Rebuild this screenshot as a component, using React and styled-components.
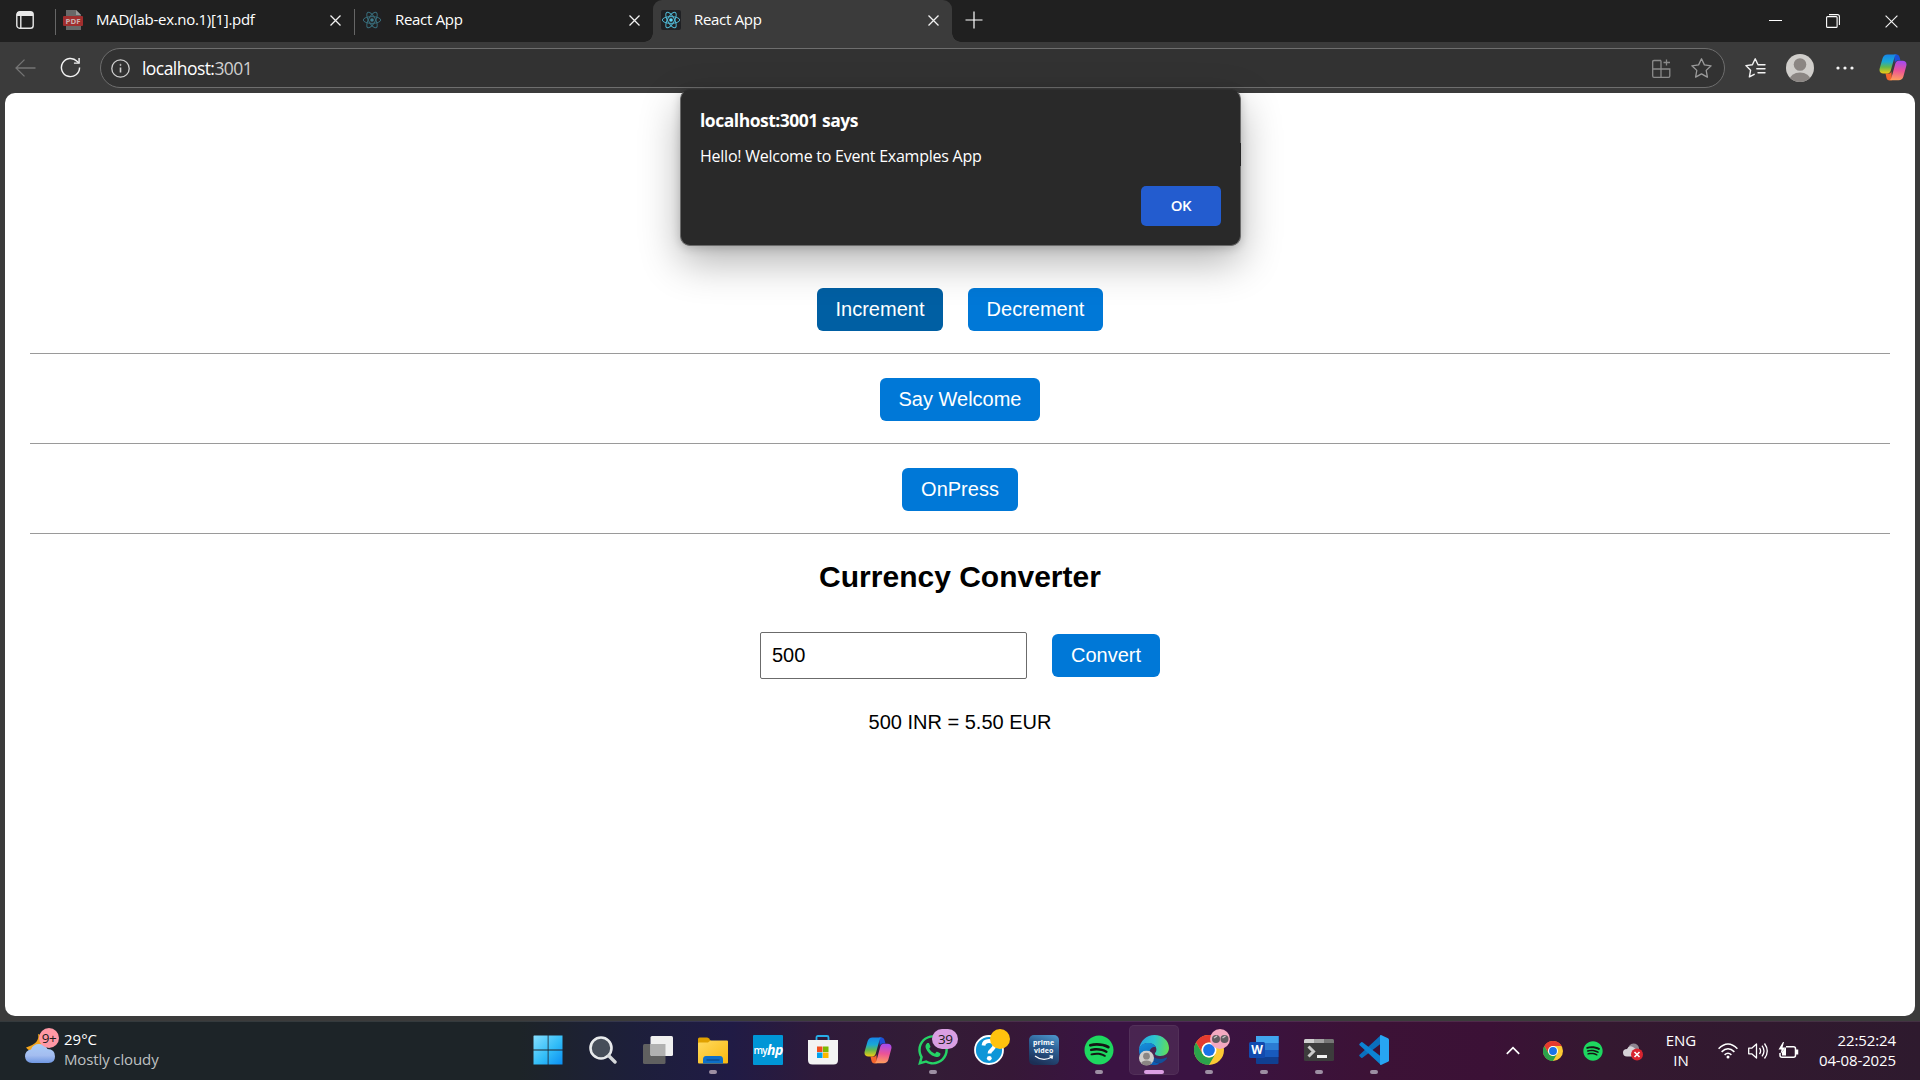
import React from 'react';
import styled, { createGlobalStyle } from 'styled-components';
import { FaSpotify, FaWhatsapp } from 'react-icons/fa';

const uiFont = '"Open Sans", "Noto Sans", sans-serif';
const pageFont = '"Liberation Sans", Arial, sans-serif';

const GlobalStyle = createGlobalStyle`
  * { box-sizing: border-box; }
  html, body { margin: 0; padding: 0; background: #3b3b3b; overflow: hidden; }
  svg { display: block; flex: none; }
`;

/* ---------- window ---------- */
const Desktop = styled.div`
  position: relative;
  display: grid;
  grid-template-columns: 1920px;
  grid-template-rows: 42px 51px 923px 5px 59px;
  width: 1920px;
  height: 1080px;
  overflow: hidden;
  background: #3b3b3b;
  font-family: ${uiFont};
`;

const TabBar = styled.div`
  display: flex;
  align-items: stretch;
  background: #202020;
  color: #fff;
`;
const TabMenu = styled.div`
  width: 55px;
  padding: 11px 0 0 16px;
`;
const Tab = styled.div`
  position: relative;
  display: flex;
  align-items: center;
  width: 299px;
  padding: 0 13px 2px 8px;
  border-radius: ${p => (p.$active ? '9px 9px 0 0' : '0')};
  background: ${p => (p.$active ? '#3b3b3b' : 'transparent')};
  ${p => p.$divider && `
    &::before { content: ''; position: absolute; left: 0; top: 9px; width: 1px; height: 26px; background: #666; }
  `}
  ${p => p.$active && `
    &::before, &::after {
      content: ''; position: absolute; bottom: 0; width: 9px; height: 9px;
    }
    &::before { left: -9px; background: radial-gradient(circle at 0 0, transparent 8.5px, #3b3b3b 9px); }
    &::after { right: -9px; background: radial-gradient(circle at 100% 0, transparent 8.5px, #3b3b3b 9px); }
  `}
`;
const TabTitle = styled.span`
  flex: 1;
  margin: 0 0 3px 13px;
  font-size: 15px;
  line-height: 20px;
  letter-spacing: ${p => p.$track || 0}px;
  white-space: nowrap;
`;
const NewTab = styled.div`
  padding: 11px 0 0 13px;
`;
const WindowButtons = styled.div`
  display: flex;
  margin-left: auto;
`;
const WindowButton = styled.div`
  display: flex;
  align-items: center;
  justify-content: center;
  width: 58px;
`;

const Toolbar = styled.div`
  display: flex;
  align-items: center;
  padding: 0 9px 0 14px;
  height: 51px;
`;
const ToolSlot = styled.div`
  display: flex;
  align-items: center;
  justify-content: center;
  width: ${p => p.$w}px;
  padding-left: ${p => p.$shift || 0}px;
`;
const AddressBar = styled.div`
  display: flex;
  align-items: center;
  width: 1625px;
  height: 40px;
  margin: 1px 0 0 0;
  padding: 0 3px 0 10px;
  border: 1px solid #6e6e6e;
  border-radius: 20px;
  background: #323232;
`;
const Address = styled.span`
  flex: 1;
  margin-left: 12px;
  color: #fff;
  font-size: 17.5px;
  line-height: 24px;
  letter-spacing: -0.55px;
  em { font-style: normal; color: #cfcfcf; }
`;

/* ---------- page ---------- */
const Page = styled.main`
  margin: 0 5px;
  padding: 0 25px;
  border-radius: 10px;
  background: #fff;
  color: #000;
  font-family: ${pageFont};
`;
const Section = styled.section`
  display: flex;
  align-items: flex-end;
  justify-content: center;
  gap: 25px;
  height: ${p => p.$h}px;
  padding-bottom: 22px;
  border-bottom: 1px solid #9a9a9a;
`;
const ActionButton = styled.button`
  height: 43px;
  width: ${p => p.$w}px;
  padding: 0;
  border: 0;
  border-radius: 6px;
  background: ${p => (p.$pressed ? '#005fa3' : '#0078d7')};
  color: #fff;
  font: 20px/43px ${pageFont};
  text-align: center;
`;
const Heading = styled.h2`
  margin: 0;
  padding-top: 25px;
  font-size: 30px;
  line-height: 36px;
  text-align: center;
`;
const ConvertRow = styled.div`
  display: flex;
  align-items: center;
  justify-content: center;
  gap: 25px;
  margin-top: 37px;
`;
const AmountInput = styled.input`
  width: 267px;
  height: 47px;
  padding: 0 11px;
  border: 1px solid #6b6b6b;
  border-radius: 2px;
  outline: none;
  background: #fff;
  color: #000;
  font: 20px ${pageFont};
`;
const Result = styled.p`
  margin: 31px 0 0;
  font-size: 20px;
  line-height: 24px;
  text-align: center;
`;

/* ---------- alert, over the page ---------- */
const Alert = styled.div`
  position: absolute;
  left: 680px;
  top: 89px;
  display: flex;
  flex-direction: column;
  width: 561px;
  height: 157px;
  padding: 18px 19px;
  border: 1px solid #6a6a6a;
  border-top-color: #2e2e2e;
  border-radius: 10px;
  background: #292929;
  color: #fff;
  box-shadow: 0 16px 40px rgba(0, 0, 0, 0.3), 0 2px 10px rgba(0, 0, 0, 0.18);
  &::after {
    content: ''; position: absolute; right: -1px; top: 53px; width: 1px; height: 23px; background: #242424;
  }
`;
const AlertTitle = styled.div`
  font-size: 17.5px;
  font-weight: 700;
  line-height: 24px;
  letter-spacing: -0.49px;
`;
const AlertText = styled.div`
  margin-top: 13px;
  font-size: 16px;
  line-height: 22px;
  letter-spacing: -0.24px;
`;
const AlertOk = styled.button`
  align-self: flex-end;
  width: 80px;
  height: 40px;
  margin-top: 19px;
  padding: 0 0 2px;
  border: 0;
  border-radius: 5px;
  background: #235ccf;
  color: #fff;
  font: 600 15px/38px ${uiFont};
  letter-spacing: -0.5px;
`;

/* ---------- taskbar ---------- */
const TaskBar = styled.footer`
  display: grid;
  grid-template-columns: 520px 882px 1fr;
  border-top: 1px solid rgba(255, 255, 255, 0.1);
  color: #fff;
  background: linear-gradient(90deg,
    #1d2428 0, #1d2428 520px, #1d1f3a 630px, #201b45 730px, #2f1a3a 820px, #331c36 930px,
    #361837 1010px, #3a1343 1110px, #3a1342 1200px, #3c1236 1370px, #3b1136 1490px,
    #341830 1600px, #2e1a2e 1920px);
`;
const Weather = styled.div`
  display: flex;
  padding: 5px 0 0 24px;
`;
const WeatherIcon = styled.div`
  position: relative;
  width: 40px;
`;
const Bubble = styled.span`
  position: absolute;
  left: ${p => p.$x}px;
  top: ${p => p.$y}px;
  width: ${p => p.$w || 20}px;
  height: 20px;
  border-radius: 10px;
  background: ${p => p.$c};
  color: #1b1b1b;
  font-size: 13.5px;
  line-height: 20px;
  letter-spacing: -0.4px;
  text-align: center;
`;
const WeatherText = styled.div`
  padding-top: 2px;
  font-size: 15px;
  line-height: 20.4px;
  div + div { color: #bfc1c2; letter-spacing: -0.12px; }
`;
const Apps = styled.div`
  display: flex;
`;
const AppSlot = styled.div`
  position: relative;
  display: flex;
  flex: 1;
  align-items: center;
  justify-content: center;
  margin: 3px 2.5px 5px;
  border-radius: 5px;
  background: ${p => (p.$active ? 'rgba(255,255,255,0.08)' : 'transparent')};
  box-shadow: ${p => (p.$active ? 'inset 0 0 0 1px rgba(255,255,255,0.05)' : 'none')};
  &::after {
    content: '';
    display: ${p => (p.$open ? 'block' : 'none')};
    position: absolute;
    left: 50%;
    bottom: 1px;
    width: ${p => (p.$active ? 20 : 8)}px;
    height: 4px;
    border-radius: 2px;
    transform: translateX(-50%);
    background: ${p => (p.$active ? '#dc9fe4' : '#9d8fa3')};
  }
`;
const HpTile = styled.div`
  display: flex;
  align-items: center;
  justify-content: center;
  width: 30px;
  height: 30px;
  border-radius: 1px;
  background: #0096d6;
  font-size: 10px;
  font-weight: 600;
  letter-spacing: -0.6px;
  i { font-size: 14px; line-height: 14px; font-weight: 700; }
`;
const PrimeTile = styled.div`
  display: flex;
  flex-direction: column;
  align-items: center;
  width: 30px;
  height: 30px;
  padding-top: 4px;
  border-radius: 5px;
  background: linear-gradient(20deg, #1c2f55 10%, #2c5f94 60%, #4f9bd0);
  font-size: 7px;
  font-weight: 700;
  line-height: 8px;
  letter-spacing: 0.1px;
`;
const Tray = styled.div`
  display: flex;
  align-items: center;
  justify-content: flex-end;
  padding: 0 24px 1px 0;
  font-size: 15px;
  line-height: 20px;
`;
const TraySlot = styled.div`
  display: flex;
  justify-content: center;
  width: ${p => p.$w}px;
`;
const TrayText = styled.div`
  width: ${p => p.$w}px;
  padding-bottom: 2px;
  text-align: ${p => p.$align || 'center'};
  letter-spacing: ${p => p.$track || 0}px;
`;

/* ---------- icons ---------- */
const Cross = ({ s = 11, w = 1.3 }) => (
  <svg width={s} height={s} viewBox="0 0 11 11" stroke="#f2f2f2" strokeWidth={w}><path d="M.5 .5l10 10M10.5 .5l-10 10" /></svg>
);
const ReactLogo = ({ dim }) => (
  <svg width="20" height="20" viewBox="0 0 20 20" opacity={dim ? 0.5 : 1}>
    <rect width="20" height="20" rx="2" fill="#202124" />
    <g fill="none" stroke="#4fb6d2" strokeWidth="1">
      <ellipse cx="10" cy="10" rx="8.7" ry="3.4" />
      <ellipse cx="10" cy="10" rx="8.7" ry="3.4" transform="rotate(60 10 10)" />
      <ellipse cx="10" cy="10" rx="8.7" ry="3.4" transform="rotate(120 10 10)" />
    </g>
    <circle cx="10" cy="10" r="1.8" fill="#61dafb" />
  </svg>
);
const PdfIcon = () => (
  <svg width="20" height="20" viewBox="0 0 20 20">
    <path d="M3 0h10l5 5v15H3z" fill="#686868" />
    <path d="M13 0l5 5h-5z" fill="#999" />
    <rect x="0" y="6" width="20" height="10" rx="1" fill="#a12e2e" />
    <text x="10" y="13.8" textAnchor="middle" fill="#c9b3b3" fontFamily="Open Sans" fontWeight="700" fontSize="7.8">PDF</text>
  </svg>
);
const CopilotLogo = ({ id }) => (
  <svg width="28" height="27" viewBox="0 0 28 27">
    <defs>
      <linearGradient id={id + 'a'} x1="0" y1="0" x2="0" y2="1">
        <stop offset="0" stopColor="#1685e8" /><stop offset=".38" stopColor="#1aa8d5" />
        <stop offset=".66" stopColor="#63b84d" /><stop offset="1" stopColor="#f3cb12" />
      </linearGradient>
      <linearGradient id={id + 'b'} x1=".5" y1="0" x2=".4" y2="1">
        <stop offset="0" stopColor="#a34af0" /><stop offset=".5" stopColor="#ec5396" /><stop offset="1" stopColor="#ffa05c" />
      </linearGradient>
    </defs>
    <path d="M15 .5h2.7c1.5 0 2.3.9 2.8 2.4l1 3.6h-2.7c-1.6 0-2.5.9-3 2.4z" fill="#1c4fd8" />
    <path d="M13 26.3h-2.7c-1.5 0-2.3-.9-2.8-2.4l-1-4.4h3c1.5 0 2.4-.9 2.9-2.3z" fill="#f4652c" />
    <path d="M8.5.5H18c-1.6.3-2.2 1.6-2.6 3l-3.6 13c-.6 2-1.8 3-3.6 3H4.4c-3 0-4.6-1.8-3.6-5.4L3.6 4.3C4.3 1.8 5.9.5 8.5.5z" fill={`url(#${id}a)`} />
    <path d="M19.5 26.3H10c1.6-.3 2.2-1.6 2.6-3l3.6-13.4c.6-2.2 1.8-3.2 3.6-3.2h3.8c3 0 4.6 1.9 3.6 5.5l-2.8 10.3c-.7 2.5-2.3 3.8-4.9 3.8z" fill={`url(#${id}b)`} />
  </svg>
);
const ChromeLogo = ({ s = 30 }) => (
  <svg width={s} height={s} viewBox="0 0 30 30">
    <circle cx="15" cy="15" r="15" fill="#fcc934" />
    <path d="M2 7.5A15 15 0 0 1 28 7.5H15A7.5 7.5 0 0 0 8.5 18.7z" fill="#e53a2f" />
    <path d="M2 7.5A15 15 0 0 0 15 30l6.5-11.3A7.5 7.5 0 0 1 8.5 18.7z" fill="#2ba24c" />
    <circle cx="15" cy="15" r="7.5" fill="#fff" />
    <circle cx="15" cy="15" r="5.9" fill="#1a73e8" />
  </svg>
);
const SpotifyLogo = ({ s }) => (
  <svg width={s} height={s} viewBox="0 0 30 30">
    <circle cx="15" cy="15" r="14" fill="#151515" />
    <FaSpotify size={30} color="#1ed760" />
  </svg>
);
const Person = ({ s }) => (
  <svg width={s} height={s} viewBox="0 0 28 28">
    <clipPath id={'pc' + s}><circle cx="14" cy="14" r="14" /></clipPath>
    <g clipPath={`url(#pc${s})`}>
      <rect width="28" height="28" fill="#d0cecb" />
      <circle cx="14" cy="10.5" r="6.3" fill="#8b8683" />
      <ellipse cx="14" cy="26" rx="10.5" ry="7.5" fill="#8b8683" />
    </g>
  </svg>
);
const EdgeLogo = () => (
  <svg width="30" height="30" viewBox="0 0 30 30" overflow="visible">
    <defs>
      <linearGradient id="e1" x1="0" y1=".4" x2="1" y2=".5">
        <stop offset="0" stopColor="#27a4e3" /><stop offset=".5" stopColor="#2dc5cf" /><stop offset="1" stopColor="#61df58" />
      </linearGradient>
      <linearGradient id="e2" x1="0" y1="0" x2=".4" y2="1">
        <stop offset="0" stopColor="#1693dd" /><stop offset="1" stopColor="#0b5db4" />
      </linearGradient>
    </defs>
    <path d="M0 14C1 6 7.5 0 15.5 0 24 0 30 6 30 13c0 5-3.8 8-8.5 8-3.7 0-6-1.3-5.5-2.8.3-.8 1.4-1.2 1.4-3.6C17.4 10.5 13.5 8 9 8c-4 0-7 2-9 6z" fill="url(#e1)" />
    <path d="M0 14c1.5-4 5-6 9-6 4.500 0 7 2 8 4.500-1.500-.9-5.500-.5-6.500 4.500-1 6 4 10.500 10 11.500-1.600 1-3.500 1.500-5.500 1.500C6.500 30-.7 23 0 14z" fill="url(#e2)" />
    <path d="M10.500 17c-.5 6.500 5 11.500 11 11.200 2.500-.8 5-2.700 6.500-5 .3-.6-.2-.9-.7-.6-1.600.8-3.300 1.300-5.300 1.300-6 0-10.500-3-10.500-7.500z" fill="#124f98" />
    <g transform="translate(0 15.500)"><Person s={15} /></g>
  </svg>
);
const WordLogo = () => (
  <svg width="30" height="28" viewBox="0 0 30 28">
    <rect x="7" y="0" width="22.5" height="28" rx="1" fill="#103f91" />
    <rect x="7" y="0" width="22.5" height="21" fill="#185abd" />
    <rect x="7" y="0" width="22.5" height="14" fill="#2b7cd3" />
    <rect x="7" y="0" width="22.5" height="7" fill="#41a5ee" />
    <rect x="0" y="6" width="16" height="16" rx="1.5" fill="#124baf" />
    <text x="8" y="18.3" textAnchor="middle" fill="#fff" fontFamily="Open Sans" fontWeight="700" fontSize="12">W</text>
  </svg>
);

const apps = [
  { id: 'start', icon: (
    <svg width="30" height="30" viewBox="0 0 30 30">
      <defs><linearGradient id="win" x1="0" y1="0" x2="1" y2="1"><stop offset="0" stopColor="#86dfff" /><stop offset=".55" stopColor="#32bdf8" /><stop offset="1" stopColor="#0a8ef2" /></linearGradient></defs>
      <path fill="url(#win)" d="M1 .5h13.700v14H.5V1zM15.500.5h14v14h-14zM.5 15.500h14.200v14H.5zM15.500 15.500h14v14h-14z" />
    </svg>) },
  { id: 'search', icon: (
    <svg width="28" height="28" viewBox="0 0 28 28">
      <circle cx="12" cy="12" r="10.5" fill="#474e5a" stroke="#e8eaec" strokeWidth="2.600" />
      <path d="M20 20l6 6" stroke="#d5d8da" strokeWidth="3.4" strokeLinecap="round" />
    </svg>) },
  { id: 'views', icon: (
    <svg width="30" height="28" viewBox="0 0 30 28">
      <rect x="0" y="8" width="22.5" height="20" rx="1.5" fill="#606060" />
      <rect x="7.5" y="0" width="22.5" height="20" rx="1.5" fill="#f0f0f0" />
      <path d="M7.5 8h15v12H9q-1.5 0-1.5-1.5z" fill="#b1b1b1" />
    </svg>) },
  { id: 'files', open: true, icon: (
    <svg width="30" height="27" viewBox="0 0 30 27">
      <defs><linearGradient id="fo" x1="0" y1="0" x2="1" y2="1"><stop offset="0" stopColor="#ffda5e" /><stop offset="1" stopColor="#f8b80f" /></linearGradient></defs>
      <path d="M0 2Q0 .5 1.5.5H9q1 0 1.7.8L13 4v4H0z" fill="#e0a100" />
      <path d="M0 6.5q0-1 1-1h9l2.500-2H29q1 0 1 1v21q0 1-1 1H1q-1 0-1-1z" fill="url(#fo)" />
      <path d="M5 26.5v-4Q5 19 8 19h14q3 0 3 3.5v4z" fill="#0d6fc8" />
      <path d="M8.5 23h13" stroke="#0a4587" strokeWidth="1.2" />
    </svg>) },
  { id: 'hp', icon: <HpTile>my<i>hp</i></HpTile> },
  { id: 'store', icon: (
    <svg width="30" height="30" viewBox="0 0 30 30">
      <path d="M8.5 6V2.5q0-1.500 1.500-1.500h9q1.500 0 1.500 1.500V6" fill="none" stroke="#27aee8" strokeWidth="1.8" />
      <path d="M0 5h30v20q0 4.500-4.500 4.500h-21Q0 29.500 0 25z" fill="#f3f3f3" />
      <rect x="9" y="11.5" width="5.5" height="5.5" fill="#f04f1f" /><rect x="15" y="11.5" width="5.5" height="5.5" fill="#7eb801" />
      <rect x="9" y="17.5" width="5.5" height="5.5" fill="#00a2ed" /><rect x="15" y="17.5" width="5.5" height="5.5" fill="#fdb800" />
    </svg>) },
  { id: 'copilot', icon: <CopilotLogo id="ct" /> },
  { id: 'whatsapp', open: true, icon: <FaWhatsapp size={34} color="#25d366" />, bubble: <Bubble $x={24} $y={4} $w={26} $c="#d99fe3">39</Bubble> },
  { id: 'help', icon: (
    <svg width="30" height="30" viewBox="0 0 30 30">
      <circle cx="15" cy="15" r="14" fill="#0d96d8" stroke="#fff" strokeWidth="1.8" />
      <path d="M9.5 10.5C9.8 7.5 12 6 15 6c3.500 0 5.500 2 5.500 4.500 0 4-5 3.800-5 8" fill="none" stroke="#fff" strokeWidth="3.8" />
      <circle cx="15.3" cy="23.3" r="2.4" fill="#fff" />
    </svg>), bubble: <Bubble $x={26} $y={4} $c="#ffc20e" /> },
  { id: 'prime', icon: (
    <PrimeTile>
      <span>prime</span>
      <span>video</span>
      <svg width="20" height="6" viewBox="0 0 20 6" fill="none" stroke="#fff" strokeWidth="1.2"><path d="M1 1q8.500 6.500 17 .8M15.500.8l3 .3-.6 2.800" /></svg>
    </PrimeTile>) },
  { id: 'spotify', open: true, icon: <SpotifyLogo s={30} /> },
  { id: 'edge', open: true, active: true, icon: <EdgeLogo /> },
  { id: 'chrome', open: true, icon: <ChromeLogo />, bubble: (
    <Bubble $x={26} $y={4} $c="#f4a9c0">
      <svg width="20" height="20" viewBox="0 0 20 20"><circle cx="6" cy="10" r="4" fill="#625c60" /><circle cx="14.5" cy="10" r="4" fill="#625c60" /><path d="M4 9l3-2M12.500 9l3-2" stroke="#c7c2c4" strokeWidth="1.5" /></svg>
    </Bubble>) },
  { id: 'word', open: true, icon: <WordLogo /> },
  { id: 'terminal', open: true, icon: (
    <svg width="30" height="22" viewBox="0 0 30 22">
      <rect width="30" height="22" rx="1.5" fill="#3c3c3c" />
      <path d="M0 4V1.5Q0 0 1.5 0H10v4z" fill="#cfcfcf" /><path d="M10 0h10v4H10z" fill="#a3a3a3" /><path d="M20 0h8.500Q30 0 30 1.500V4H20z" fill="#767676" />
      <path d="M4.5 7.5l5 5-5 5" fill="none" stroke="#c9c9c9" strokeWidth="3" /><rect x="13" y="16" width="10" height="3" fill="#f2f2f2" />
    </svg>) },
  { id: 'code', open: true, icon: (
    <svg width="30" height="30" viewBox="0 0 30 30">
      <path d="M22 0v8.500L3.500 22.800q-.7.5-1.300 0L.6 21.300q-.8-.8 0-1.500z" fill="#0a6fbd" />
      <path d="M22 30v-8.500L3.500 7.200q-.7-.5-1.300 0L.6 8.700q-.8.8 0 1.500z" fill="#0c83d2" />
      <path d="M22 0l7 3.200q1 .5 1 1.600v20.400q0 1.100-1 1.600L22 30q-1 0-1-1V1q0-1 1-1z" fill="#27a5f2" />
    </svg>) },
];

export default function App() {
  return (
    <Desktop>
      <GlobalStyle />
      <TabBar>
        <TabMenu>
          <svg width="18" height="18" viewBox="0 0 18 18" fill="none" stroke="#e8e8e8" strokeWidth="1.4">
            <rect x=".8" y=".8" width="16.4" height="16.4" rx="2.8" /><path d="M1 3h16" strokeWidth="4" /><path d="M4.8 4v13" />
          </svg>
        </TabMenu>
        <Tab $divider><PdfIcon /><TabTitle $track={-0.3}>MAD(lab-ex.no.1)[1].pdf</TabTitle><Cross /></Tab>
        <Tab $divider><ReactLogo dim /><TabTitle $track={-0.3}>React App</TabTitle><Cross /></Tab>
        <Tab $active><ReactLogo /><TabTitle $track={-0.3}>React App</TabTitle><Cross /></Tab>
        <NewTab>
          <svg width="18" height="18" viewBox="0 0 18 18" stroke="#fff" strokeWidth="1.2"><path d="M9 .5v17M.5 9h17" /></svg>
        </NewTab>
        <WindowButtons>
          <WindowButton><svg width="13" height="2" viewBox="0 0 13 2"><path d="M0 0h13v1H0z" fill="#fff" /></svg></WindowButton>
          <WindowButton>
            <svg width="14" height="14" viewBox="0 0 14 14" fill="none" stroke="#fff" strokeWidth="1.1"><rect x=".6" y="2.6" width="10.5" height="10.8" rx="1" /><path d="M3 .6h8.400q2 0 2 2V11" /></svg>
          </WindowButton>
          <WindowButton><Cross s={13} w={1} /></WindowButton>
        </WindowButtons>
      </TabBar>

      <Toolbar>
        <ToolSlot $w={22}>
          <svg width="21" height="18" viewBox="0 0 21 18" fill="none" stroke="#757575" strokeWidth="1.3"><path d="M20.500 9H1M9.500.6L1 9l8.500 8.400" /></svg>
        </ToolSlot>
        <ToolSlot $w={64} $shift={4}>
          <svg width="21" height="21" viewBox="0 0 22 22" fill="none" stroke="#f2f2f2" strokeWidth="1.5">
            <path d="M20.500 11A9.500 9.500 0 1 1 17.800 4.400L19.500 6" /><path d="M20 1v5.400h-5.400" />
          </svg>
        </ToolSlot>
        <AddressBar>
          <svg width="19" height="19" viewBox="0 0 19 19" fill="none" stroke="#cfcfcf" strokeWidth="1.3">
            <circle cx="9.5" cy="9.5" r="8.7" /><path d="M9.500 8.500v5" strokeWidth="1.6" /><circle cx="9.5" cy="5.9" r=".7" fill="#cfcfcf" strokeWidth=".5" />
          </svg>
          <Address>localhost:<em>3001</em></Address>
          <ToolSlot $w={40}>
            <svg width="19" height="19" viewBox="0 0 19 19" fill="none" stroke="#8a8a8a" strokeWidth="1.3">
              <path d="M9 1.500H2q-1.300 0-1.300 1.300V17q0 1.300 1.300 1.300h14.500q1.300 0 1.300-1.300v-7H.7M9 1.500v16.800M14.500.5v6M11.500 3.500h6.500" />
            </svg>
          </ToolSlot>
          <ToolSlot $w={40}>
            <svg width="21" height="20" viewBox="0 0 21 20" fill="none" stroke="#9b9b9b" strokeWidth="1.3" strokeLinejoin="round">
              <path d="M10.500.8l2.900 6.100 6.700.9-4.900 4.600 1.200 6.700-5.900-3.200-5.900 3.200 1.200-6.700L.9 7.800l6.700-.9z" />
            </svg>
          </ToolSlot>
        </AddressBar>
        <ToolSlot $w={60}>
          <svg width="21" height="20" viewBox="0 0 21 20" fill="none" stroke="#f2f2f2" strokeWidth="1.4" strokeLinejoin="round" strokeLinecap="round">
            <path d="M14.500 6.600l-1.600-.1L10.200.8 7.400 6.700l-6.500.9 4.700 4.600-1.200 6.700 4.800-2.600M13 6.700h7M11.800 10.700H20M13 14.700h7" />
          </svg>
        </ToolSlot>
        <ToolSlot $w={30}><Person s={28} /></ToolSlot>
        <ToolSlot $w={60}>
          <svg width="18" height="4" viewBox="0 0 18 4" fill="#f5f5f5"><circle cx="2" cy="2" r="1.6" /><circle cx="9" cy="2" r="1.6" /><circle cx="16" cy="2" r="1.6" /></svg>
        </ToolSlot>
        <ToolSlot $w={36}><CopilotLogo id="cb" /></ToolSlot>
      </Toolbar>

      <Page>
        <Section $h={261}>
          <ActionButton $w={126} $pressed>Increment</ActionButton>
          <ActionButton $w={135}>Decrement</ActionButton>
        </Section>
        <Section $h={90}><ActionButton $w={160}>Say Welcome</ActionButton></Section>
        <Section $h={90}><ActionButton $w={116}>OnPress</ActionButton></Section>
        <Heading>Currency Converter</Heading>
        <ConvertRow>
          <AmountInput defaultValue="500" />
          <ActionButton $w={108}>Convert</ActionButton>
        </ConvertRow>
        <Result>500 INR = 5.50 EUR</Result>
      </Page>

      <div />

      <TaskBar>
        <Weather>
          <WeatherIcon>
            <svg width="32" height="36" viewBox="0 0 32 36">
              <defs><linearGradient id="cl" x1="0" y1="0" x2="0" y2="1"><stop offset="0" stopColor="#a9cdf8" /><stop offset=".6" stopColor="#a4bdf0" /><stop offset="1" stopColor="#6f97e2" /></linearGradient></defs>
              <path d="M14 7q2.500 9-12 13.500Q5 25 12 24l10-3V10z" fill="#f3a51d" />
              <path d="M8 36q-6.500 0-7-6.500Q1 23.500 7 22.500 9 17 15 17t8.500 5Q31 22 31 29.500 31 36 24.500 36z" fill="url(#cl)" />
            </svg>
            <Bubble $x={15} $y={1} $c="#ff98a5">9+</Bubble>
          </WeatherIcon>
          <WeatherText><div>29°C</div><div>Mostly cloudy</div></WeatherText>
        </Weather>
        <Apps>
          {apps.map(a => (
            <AppSlot key={a.id} $open={a.open} $active={a.active}>{a.icon}{a.bubble}</AppSlot>
          ))}
        </Apps>
        <Tray>
          <TraySlot $w={40}><svg width="14" height="9" viewBox="0 0 14 9" fill="none" stroke="#fff" strokeWidth="1.7"><path d="M.8 7.800L7 1.600l6.200 6.200" /></svg></TraySlot>
          <TraySlot $w={40}><ChromeLogo s={20} /></TraySlot>
          <TraySlot $w={40}><SpotifyLogo s={20} /></TraySlot>
          <TraySlot $w={40}>
            <svg width="20" height="20" viewBox="0 0 20 20" overflow="visible">
              <path d="M5 9q0-6 5.500-6.500Q15 2.500 16 7v8H9z" fill="#8d8590" />
              <path d="M4 15.500Q0 15.500 0 11.500 0 8 4 8q2-4 6-2l4 3v6.500z" fill="#d6d2d7" />
              <circle cx="14" cy="13.5" r="6" fill="#d9242f" /><path d="M11.500 11l5 5M16.500 11l-5 5" stroke="#fff" strokeWidth="1.6" />
            </svg>
          </TraySlot>
          <TrayText $w={56}>ENG<br />IN</TrayText>
          <TraySlot $w={38}>
            <svg width="20" height="16" viewBox="0 0 20 16" fill="none" stroke="#fff" strokeWidth="1.5">
              <path d="M.6 5.800q9.400-9.600 18.800 0M3.600 8.900q6.400-6.400 12.800 0M6.600 11.900q3.400-3.200 6.800 0" /><circle cx="10" cy="14" r="1.5" fill="#fff" stroke="none" />
            </svg>
          </TraySlot>
          <TraySlot $w={22}>
            <svg width="20" height="18" viewBox="0 0 20 18" fill="none" stroke="#fff" strokeWidth="1.3" strokeLinejoin="round">
              <path d="M.7 6.200v5.600h3L8.500 16V2L3.700 6.200zM11.500 6q2.200 3 0 6M14 3.700q4 5.300 0 10.600M16.500 1.500q5.500 7.500 0 15" />
            </svg>
          </TraySlot>
          <TraySlot $w={38}>
            <svg width="21" height="18" viewBox="0 0 21 18" fill="none" stroke="#fff" strokeWidth="1.5">
              <path d="M8 4.700h7.500q2 0 2 2v6.600q0 2-2 2H4q-2 0-2-2V11" /><path d="M19 7.500v5" strokeWidth="2.5" /><path d="M5 0L.5 7.500h3L2.500 12l5-6.500h-3L6 0z" fill="#fff" stroke="none" /><path d="M4 13.500V10l4-5v8.500z" fill="#fff" stroke="none" />
            </svg>
          </TraySlot>
          <TrayText $w={89} $align="right" $track={-0.12}>22:52:24<br />04-08-2025</TrayText>
        </Tray>
      </TaskBar>

      <Alert>
        <AlertTitle>localhost:3001 says</AlertTitle>
        <AlertText>Hello! Welcome to Event Examples App</AlertText>
        <AlertOk>OK</AlertOk>
      </Alert>
    </Desktop>
  );
}
